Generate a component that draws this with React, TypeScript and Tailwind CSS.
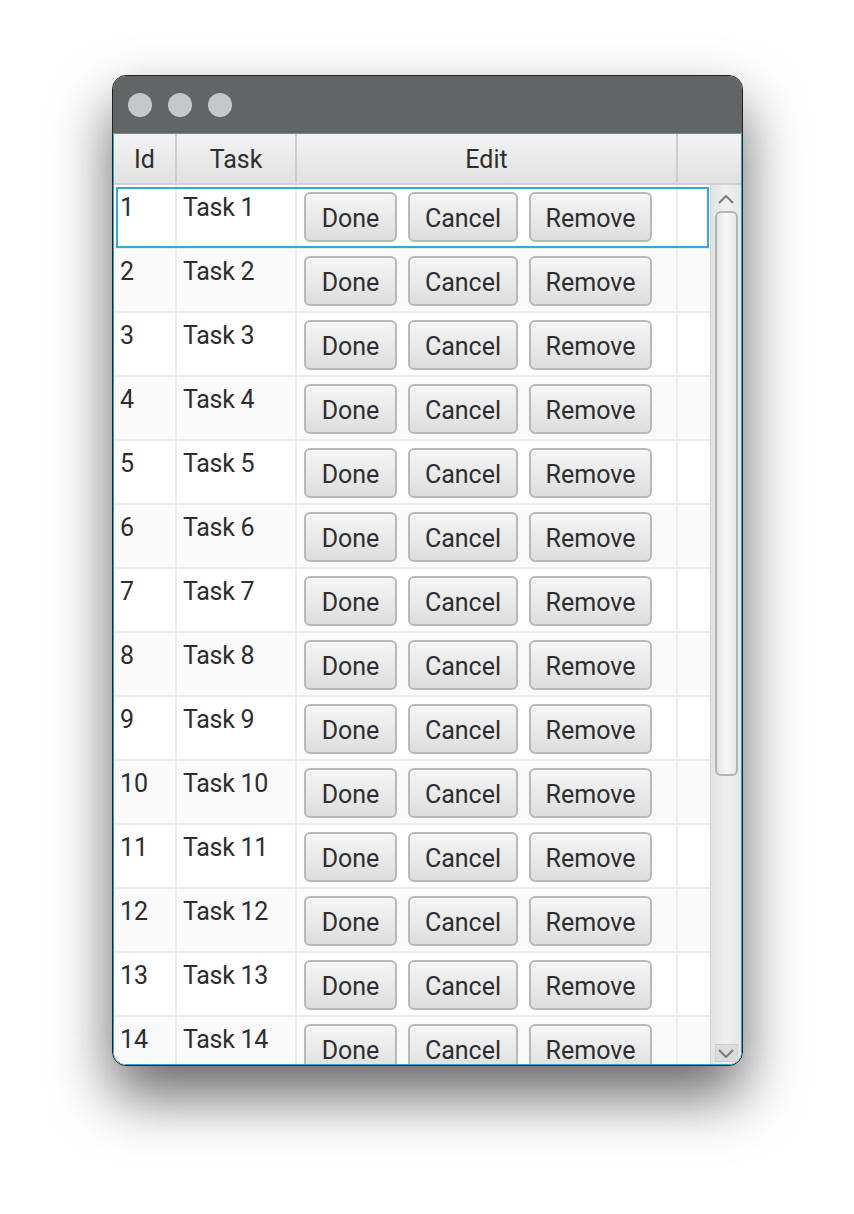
import React from 'react'

const rows = Array.from({ length: 14 }, (_, i) => ({ id: i + 1, task: `Task ${i + 1}` }))

function RowButton({ label, width }: { label: string; width: string }) {
  return (
    <button
      className={`${width} h-[50px] shrink-0 rounded-[6px] border-2 border-[#b8b8b8] bg-gradient-to-b from-[#f5f5f5] to-[#dedede] text-[#2e2e2e] text-[25px] leading-none pt-[2px]`}
    >
      {label}
    </button>
  )
}

function Chevron({ down }: { down?: boolean }) {
  return (
    <svg width="16" height="9" viewBox="0 0 16 9" className="block">
      <path
        d={down ? 'M1 1 L8 8 L15 1' : 'M1 8 L8 1 L15 8'}
        fill="none"
        stroke="#7a7a7a"
        strokeWidth="2"
      />
    </svg>
  )
}

export default function App() {
  return (
    <div
      className="w-[854px] h-[1214px] bg-white pl-[112px] pt-[75px]"
      style={{ fontFamily: 'Roboto, "Liberation Sans", sans-serif' }}
    >
      <div className="w-[631px] h-[991px] rounded-[14px] border border-[#222222] overflow-hidden flex flex-col bg-white shadow-[0_30px_60px_rgba(0,0,0,0.6)]">
        {/* title bar */}
        <div className="h-[57px] shrink-0 bg-[#636466] flex items-center gap-[16px] pl-[15px]">
          <div className="w-[24px] h-[24px] rounded-full bg-[#c6c7c9]" />
          <div className="w-[24px] h-[24px] rounded-full bg-[#c6c7c9]" />
          <div className="w-[24px] h-[24px] rounded-full bg-[#c6c7c9]" />
        </div>

        {/* table */}
        <div className="flex-1 min-h-0 flex flex-col border border-[#2ba5d6] rounded-b-[13px] overflow-hidden text-[#2e2e2e] text-[25px]">
          {/* header */}
          <div className="h-[51px] shrink-0 flex bg-gradient-to-b from-[#f3f3f3] to-[#e1e1e1] border-b-2 border-[#d2d2d2]">
            <div className="w-[63px] shrink-0 flex items-center justify-center pt-[3px] border-r-2 border-[#cdcdcd]">Id</div>
            <div className="w-[120px] shrink-0 flex items-center justify-center pt-[3px] border-r-2 border-[#cdcdcd]">Task</div>
            <div className="w-[381px] shrink-0 flex items-center justify-center pt-[3px] border-r-2 border-[#cdcdcd]">Edit</div>
            <div className="flex-1" />
          </div>

          {/* body */}
          <div className="flex-1 min-h-0 flex">
            <div className="flex-1 min-w-0 overflow-hidden">
              {rows.map((row) => (
                <div
                  key={row.id}
                  className={`relative h-[64px] shrink-0 flex border-b-2 border-[#ededed] ${row.id % 2 === 0 ? 'bg-[#f9f9f9]' : 'bg-white'}`}
                >
                  <div className="w-[63px] shrink-0 pl-[6px] pt-[8px] leading-[30px] border-r-2 border-[#ededed]">
                    {row.id}
                  </div>
                  <div className="w-[120px] shrink-0 pl-[6px] pt-[8px] leading-[30px] border-r-2 border-[#ededed] tracking-[-0.3px]">
                    {row.task}
                  </div>
                  <div className="w-[381px] shrink-0 flex gap-[11px] pl-[7px] pt-[7px] border-r-2 border-[#ededed]">
                    <RowButton label="Done" width="w-[93px]" />
                    <RowButton label="Cancel" width="w-[110px]" />
                    <RowButton label="Remove" width="w-[123px]" />
                  </div>
                  <div className="flex-1" />
                  {row.id === 1 && (
                    <div className="absolute left-[2px] right-[1px] top-[2px] bottom-[-1px] border-2 border-[#34a8d6]" />
                  )}
                </div>
              ))}
            </div>

            {/* vertical scrollbar */}
            <div className="w-[31px] shrink-0 flex flex-col items-center bg-gradient-to-r from-[#e2e2e2] via-[#efefef] to-[#e6e6e6] border-l border-[#d6d6d6]">
              <div className="h-[26px] flex items-center justify-center pt-[2px]">
                <Chevron />
              </div>
              <div className="w-[23px] h-[565px] rounded-[6px] border-2 border-[#b4b4b4] bg-gradient-to-r from-[#e6e6e6] via-[#f7f7f7] to-[#e8e8e8]" />
              <div className="flex-1" />
              <div className="w-[23px] h-[18px] mb-[2px] flex items-center justify-center bg-[#dcdcdc] border border-[#cfcfcf]">
                <Chevron down />
              </div>
            </div>
          </div>
        </div>
      </div>
    </div>
  )
}
